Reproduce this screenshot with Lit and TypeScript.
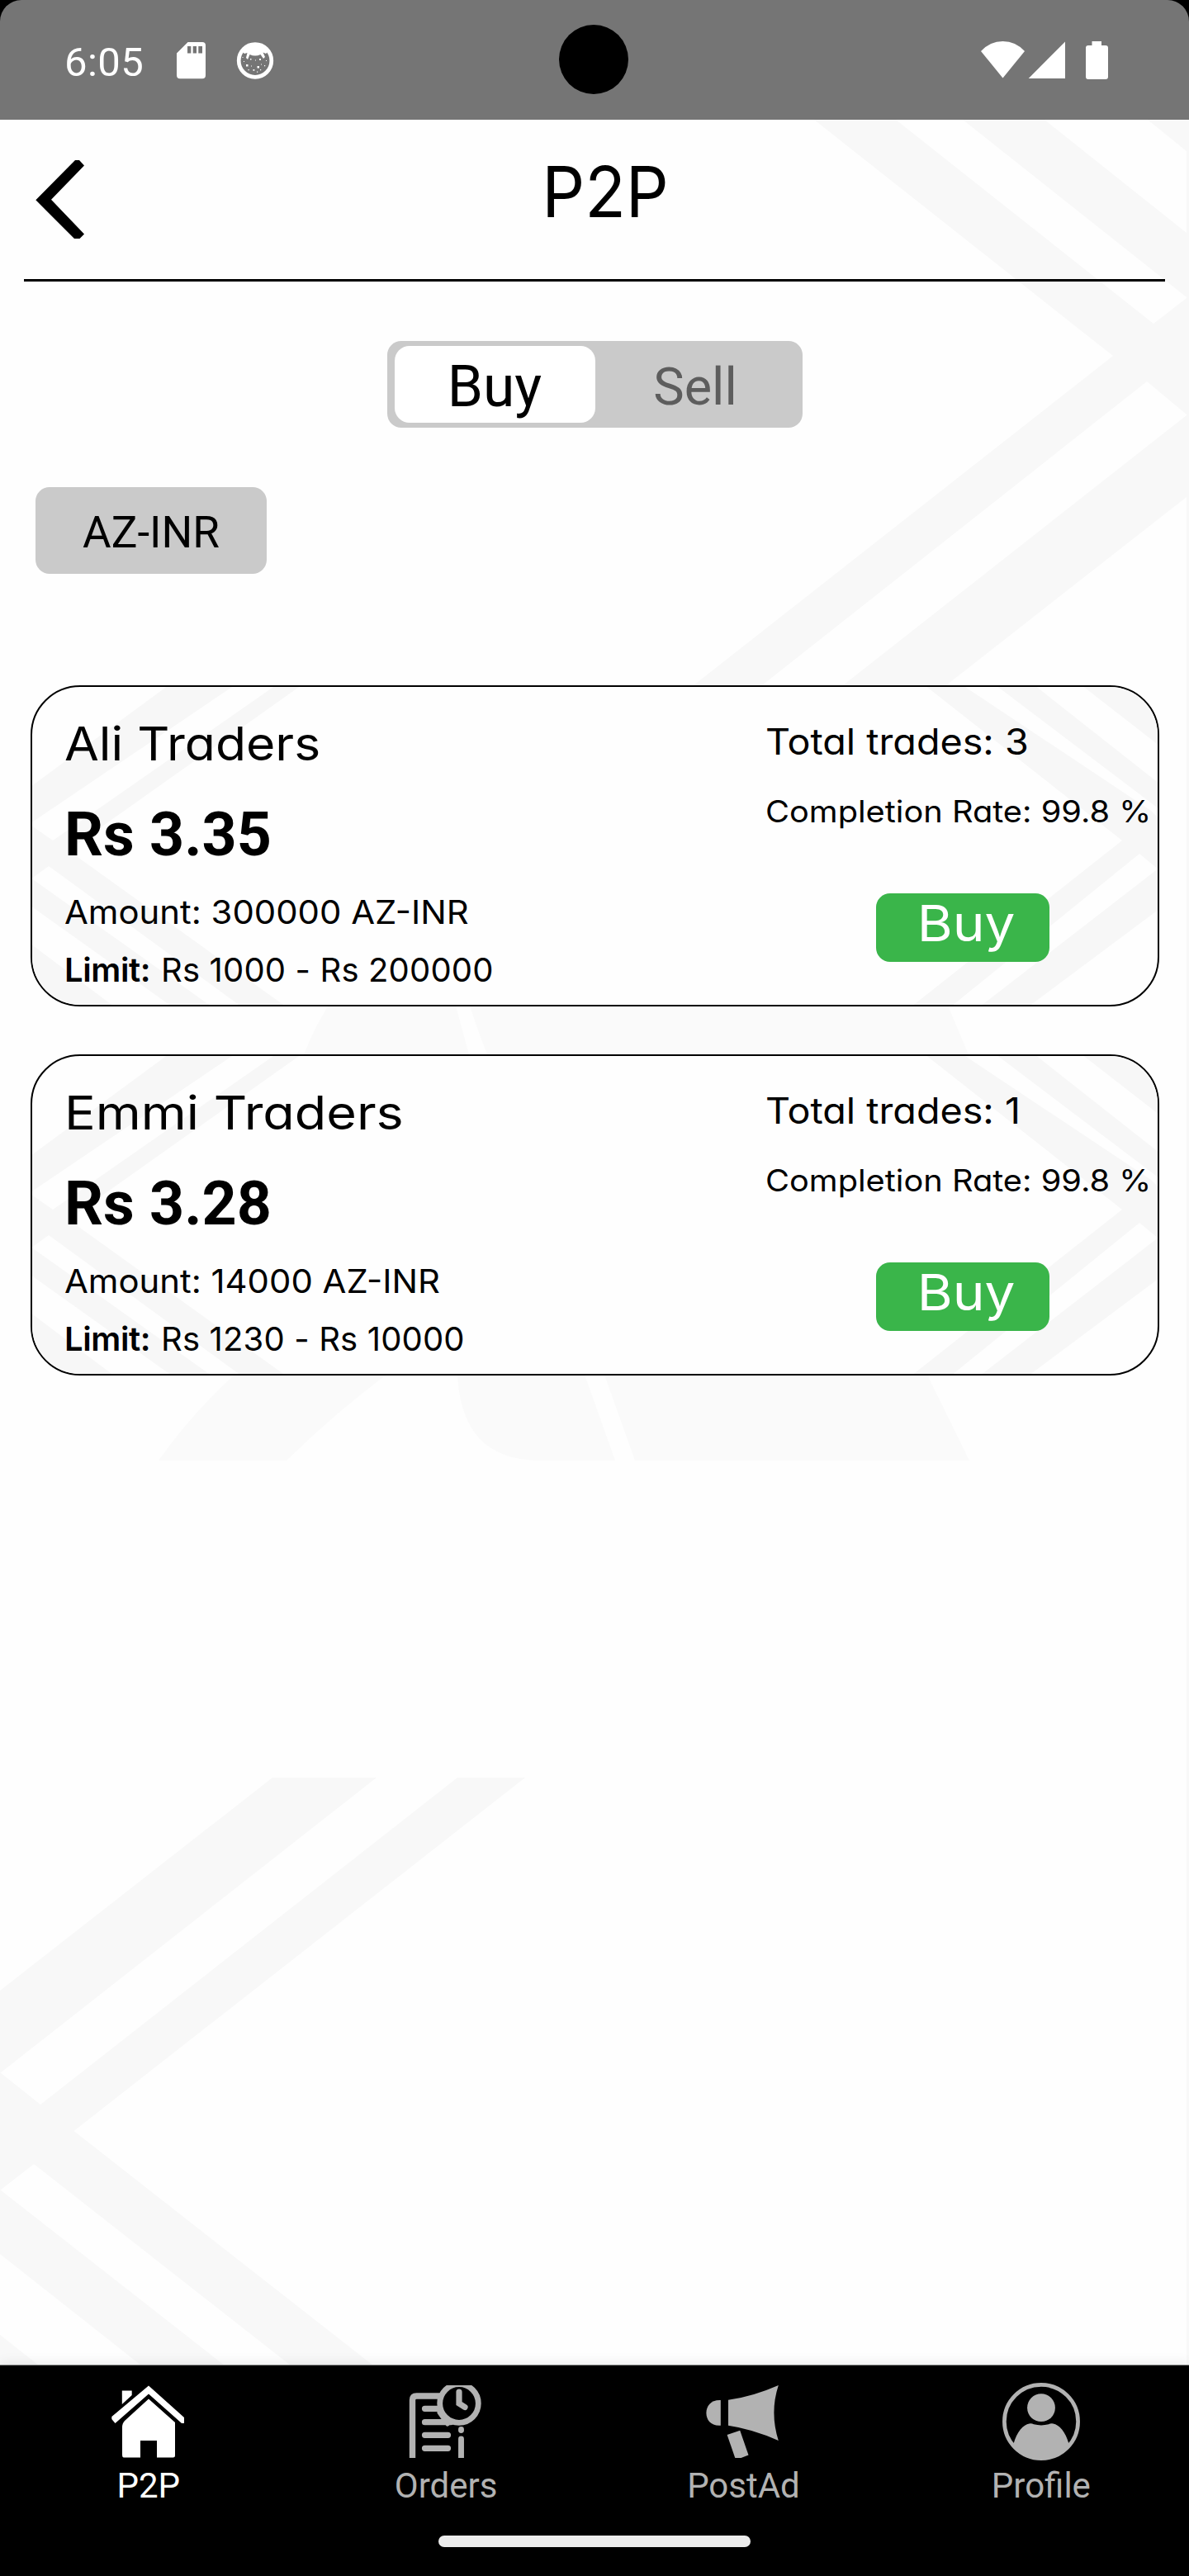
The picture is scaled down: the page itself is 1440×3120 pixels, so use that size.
import { LitElement, html, css } from "lit";

interface Trader {
  name: string;
  price: string;
  amount: string;
  limit: string;
  trades: number;
  rate: string;
  nameStretch: number;
}

const TRADERS: Trader[] = [
  { name: "Ali Traders", price: "3.35", amount: "300000", limit: "Rs 1000 - Rs 200000", trades: 3, rate: "99.8", nameStretch: 1.073 },
  { name: "Emmi Traders", price: "3.28", amount: "14000", limit: "Rs 1230 - Rs 10000", trades: 1, rate: "99.8", nameStretch: 1.112 },
];

class TraderCard extends LitElement {
  static properties = { trader: { attribute: false } };
  declare trader: Trader;

  static styles = css`
    :host { display: block; }
    .card {
      position: relative;
      box-sizing: border-box;
      height: 389px;
      border: 2px solid #000;
      border-radius: 60px;
      background: #fefefe;
      overflow: hidden;
      display: flex;
      justify-content: space-between;
      font-family: Inter, "Liberation Sans", sans-serif;
      font-feature-settings: "cv11";
      color: #000;
      white-space: nowrap;
    }
    .pattern { position: absolute; left: -2px; top: -2px; width: 1367px; height: 389px; }
    .left { position: relative; padding: 30px 0 0 39px; }
    .right { position: relative; width: 475px; padding-top: 36px; }
    .name, .amount, .total, .rate { transform-origin: left center; width: max-content; }
    .name { font-size: 56.5px; line-height: 78px; }
    .price { font: 700 73.5px/100px Roboto, sans-serif; margin: 21px 0 9px 0; }
    .row { font-size: 40px; line-height: 70px; }
    .amount { transform: scaleX(1.046); }
    .key { font-weight: 600; margin-right: 13px; letter-spacing: -0.4px; }
    .val { letter-spacing: 0.15px; }
    .total { font-size: 43.5px; line-height: 60px; transform: scaleX(1.073); }
    .rate { font-size: 37px; line-height: 60px; margin-top: 25px; transform: scaleX(1.074); }
    .buy {
      display: block;
      box-sizing: border-box;
      width: 210px;
      height: 83px;
      margin: 69px 0 0 134px;
      padding: 0 0 11px 9px;
      border: 0;
      border-radius: 17px;
      background: #3ab54a;
      color: #fff;
      font: 400 61px/72px Inter, sans-serif;
      text-align: center;
    }
    .buy span { display: inline-block; transform: scaleX(1.077); }
  `;

  render() {
    const t = this.trader;
    return html`<article class="card">
      <svg class="pattern" viewBox="37 830 1367 389" fill="#f7f7f7">
        <path d="M204 830H284L37 997V953Z" />
        <path d="M334 830H365L94 1022V1038L346 1219H292L59 1049L37 1065V999L64 1018Z" />
        <path d="M37 1063L256 1219H208L37 1097Z" />
        <path d="M37 1143L138 1219H37Z" />
        <path d="M1120 830H1166L1394 982L1404 992V1054L1380 1034L1152 1219H1104L1359 1018Z" />
        <path d="M1206 830H1253L1404 949V980Z" />
        <path d="M1310 830H1404V903Z" />
        <path d="M1187 1219L1404 1051V1101L1246 1219Z" />
      </svg>
      <div class="left">
        <div class="name" style="transform:scaleX(${t.nameStretch})">${t.name}</div>
        <div class="price">Rs ${t.price}</div>
        <div class="row amount">Amount: ${t.amount} AZ-INR</div>
        <div class="row"><span class="key">Limit:</span><span class="val">${t.limit}</span></div>
      </div>
      <div class="right">
        <div class="total">Total trades: ${t.trades}</div>
        <div class="rate">Completion Rate: ${t.rate} %</div>
        <button class="buy"><span>Buy</span></button>
      </div>
    </article>`;
  }
}
customElements.define("trader-card", TraderCard);

const homeIcon = html`<svg class="icon" viewBox="133 2886 96 96">
  <path d="M181 2890.5L224 2929V2936H221L181 2900.5L140.500 2936L136.300 2931V2928Z" />
  <path d="M148.800 2896.500H160.700V2902L148.800 2913Z" />
  <path d="M181 2906.500L213 2935V2975Q213 2977.500 210.500 2977.500H191V2957H171V2977.500H151Q149 2977.500 149 2974V2941Q149 2936 152 2933Z" />
</svg>`;

const ordersIcon = html`<svg class="icon" viewBox="493 2886 96 96">
  <defs><clipPath id="box"><rect x="493" y="2890" width="96" height="88" /></clipPath></defs>
  <g clip-path="url(#box)" fill="none" stroke="currentColor" stroke-width="7.2" stroke-linecap="round">
    <path d="M500.500 2984V2908Q500.500 2903 505.500 2903H534" stroke-linecap="butt" stroke-width="7.400" />
    <path d="M515.500 2918.300H532M515.500 2934.700H547M515.500 2950.300H543.500M515.500 2966.300H543.500" />
    <circle cx="557" cy="2912" r="23.300" stroke-width="6.800" />
    <path d="M557 2898V2912L564 2916.500" />
    <path d="M559.500 2943.400V2944.600M559.500 2955V2984" stroke-width="6.900" />
    <path d="M533 2923L543 2937" stroke-width="5" />
  </g>
</svg>`;

const postIcon = html`<svg class="icon" viewBox="853 2886 96 96">
  <path d="M873.800 2908V2938.700C862 2939.500 856.400 2932 856.400 2923.500S862 2907.500 873.800 2908Z" />
  <path d="M883 2907.700Q912 2904 943.800 2890Q933 2923 943.800 2957Q912 2943 883 2938.800Z" />
  <path d="M881.600 2950L897.200 2944.700L907.500 2974.500L898.500 2978H891.300Z" />
</svg>`;

const profileIcon = html`<svg class="icon" viewBox="1212.500 2885 96 96">
  <circle cx="1260.500" cy="2933" r="44.600" fill="none" stroke="currentColor" stroke-width="4.700" />
  <circle cx="1260.500" cy="2916.200" r="16.900" />
  <path d="M1227 2960C1231 2945 1239 2936.500 1246 2935.500Q1249 2935 1251.500 2936.300Q1260.500 2938.600 1269.500 2936.300Q1272 2935 1275 2935.500C1282 2936.500 1290 2945 1294 2960Q1282 2979 1260.500 2979T1227 2960Z" />
</svg>`;

const TABS = [
  { label: "P2P", icon: homeIcon, active: true },
  { label: "Orders", icon: ordersIcon, active: false },
  { label: "PostAd", icon: postIcon, active: false },
  { label: "Profile", icon: profileIcon, active: false },
];

class AppRoot extends LitElement {
  static styles = css`
    :host { display: block; width: 1440px; height: 3120px; }
    .screen {
      position: relative;
      display: flex;
      flex-direction: column;
      width: 1440px;
      height: 3120px;
      overflow: hidden;
      background: #fefefe;
      color: #000;
      font-family: Roboto, "Liberation Sans", sans-serif;
      isolation: isolate;
    }
    .backdrop { position: absolute; left: 0; top: 0; z-index: -1; }
    .status-wrap { background: #000; height: 145px; flex: none; }
    .status {
      position: relative;
      box-sizing: border-box;
      display: flex;
      justify-content: space-between;
      height: 145px;
      padding: 0 98px 0 78px;
      background: #757575;
      border-radius: 26px 26px 0 0;
      color: #fff;
    }
    .group { display: flex; align-items: flex-start; }
    .time { font-size: 49px; line-height: 151px; width: 136px; letter-spacing: 0.4px; }
    .group svg { margin-top: 50px; display: block; }
    .group .face { margin-left: 36.5px; }
    .camera {
      position: absolute;
      left: 677px;
      top: 30px;
      width: 84px;
      height: 84px;
      border-radius: 50%;
      background: #000;
    }
    .header {
      flex: none;
      display: flex;
      box-sizing: border-box;
      height: 196px;
      margin: 0 29px;
      padding: 0 48px 0 14px;
      border-bottom: 3px solid #000;
    }
    .back { width: 60px; height: 96px; margin-top: 49px; }
    .title {
      flex: 1;
      margin: 0;
      text-align: center;
      font: 400 84.6px/175px Inter, sans-serif;
      transform: scaleX(0.963);
    }
    .toggle {
      align-self: center;
      box-sizing: border-box;
      display: grid;
      grid-template-columns: 243px 1fr;
      width: 503px;
      height: 105px;
      margin-top: 72px;
      padding: 6px 9px;
      border-radius: 17px;
      background: #cacaca;
      text-align: center;
    }
    .seg { line-height: 100px; font-size: 69.5px; }
    .seg.on { height: 93px; border-radius: 18px; background: #fff; }
    .seg.off { font-size: 63px; line-height: 99px; color: #5d5d5d; padding-left: 1px; }
    .chip {
      width: 280px;
      height: 105px;
      margin: 72px 0 0 43px;
      border-radius: 17px;
      background: #cacaca;
      font-size: 53px;
      line-height: 110px;
      text-align: center;
    }
    .list { display: flex; flex-direction: column; gap: 58px; margin: 135px 36px 0 37px; }
    .nav {
      display: flex;
      flex-direction: column;
      align-items: center;
      box-sizing: border-box;
      height: 255px;
      margin-top: auto;
      background: #000;
      box-shadow: 0 -1px 0 #8a8c8b, 0 -3px 14px rgba(0, 0, 0, 0.08);
    }
    .tabs { display: grid; grid-template-columns: repeat(4, 360.4px); width: 1441px; height: 206px; }
    .tab { display: flex; flex-direction: column; align-items: center; color: #b2b2b2; font-size: 42px; line-height: 50px; }
    .tab.active { color: #fff; }
    .icon { width: 96px; height: 96px; margin: 20px 0 5px; fill: currentColor; }
    .pill { width: 378px; height: 14px; border-radius: 7px; background: #ececec; }
  `;

  render() {
    return html`<main class="screen">
      <svg class="backdrop" width="1440" height="3120" viewBox="0 0 1440 3120">
        <g fill="#f8f8f8">
          <path d="M986 145H1085L1397 392L1437 361V502L1389 462L923 830H840L1348 431Z" />
          <path d="M1166 145H1265L1437 282V360Z" />
          <path d="M1390 145H1437V183Z" />
          <path d="M1437 503V602L1146 830H1021Z" />
          <path d="M330 2153H456L0 2511V2411Z" />
          <path d="M554 2153H636L89.500 2581L452 2865H352L41 2621L0 2653V2510L49 2549Z" />
          <path d="M0 2652L272 2865H171L0 2730Z" />
          <path d="M0 2828L47 2865H0Z" />
          <path d="M1437 145H1440V2865H1437Z" />
        </g>
        <g fill="#fafafa">
          <path d="M398 1218Q384 1238 368 1277H568Q560 1248 552 1218Z" />
          <path d="M569 1218H1148L1173 1277H590Q577 1244 569 1218Z" />
          <path d="M284 1665Q232 1712 192 1769H347Q405 1712 468 1665Z" />
          <path d="M554 1665Q559 1769 654 1769H745L708 1665Z" />
          <path d="M732 1665L769 1769H1174L1123 1665Z" />
        </g>
      </svg>

      <div class="status-wrap">
        <div class="status">
          <div class="group">
            <div class="time">6:05</div>
            <svg width="35" height="46" viewBox="0 0 35 46" fill="#fff">
              <path fill-rule="evenodd" d="M13.500 1H31Q35 1 35 5V41Q35 45.300 31 45.300H4Q0 45.300 0 41V14.500ZM13 6V14.500H17.300V6ZM19.700 6V14.500H24V6ZM26.300 6V14.500H31V6Z" />
            </svg>
            <svg class="face" width="46" height="46" viewBox="-23 -23 46 46" fill="#fff">
              <circle cx="0" cy="0.500" r="19.800" fill="none" stroke="#fff" stroke-width="4.700" />
              <path d="M-16 -11Q-8 -20 0 -20T16 -11L13 -8L9.500 -9.500L12 -4L10 -2L6.500 -7Q0 -4 -6.500 -7L-9 -1L-11 -3L-9.500 -9L-13 -8Z" />
              <path d="M-6 -2h1.500v1.500h-1.500zM5 -2h2v2h-2zM0 -.500h1v1H0zM-11 5h2.500v2.500H-11zM2.500 7h2.500v2.500H2.500zM-5 6.500h1v1H-5zM7 4.500h1v1H7zM11 6h1.200v1.200H11zM-8.500 11h1.200v1.200H-8.500zM-2.500 11h1.800v1.800h-1.800zM6 11h1.200v1.200H6zM2 13.500h1.200v1.200H2zM-15.500 -4h1v1h-1zM-14 1h1v1H-14zM13 0h1v1H13z" />
            </svg>
          </div>
          <div class="group">
            <svg width="154" height="46" viewBox="1188 50 154 46" fill="#fff">
              <path d="M1188 62Q1199 50 1214.500 50T1241 62L1214.500 94.500Z" />
              <path d="M1290 50.500V95H1245.700Z" />
              <path d="M1322.500 50H1334V55H1339Q1342 55 1342 58V93Q1342 96 1339 96H1318Q1315 96 1315 93V58Q1315 55 1318 55H1322.500Z" />
            </svg>
          </div>
          <div class="camera"></div>
        </div>
      </div>

      <header class="header">
        <svg class="back" viewBox="43 194 60 96">
          <path d="M91 194H96L102 200.500L62 241.800L102 283.500L96.500 289H90L43.300 242.300Z" />
        </svg>
        <h1 class="title">P2P</h1>
      </header>

      <div class="toggle">
        <div class="seg on">Buy</div>
        <div class="seg off">Sell</div>
      </div>
      <div class="chip">AZ-INR</div>

      <section class="list">
        ${TRADERS.map((t) => html`<trader-card .trader=${t}></trader-card>`)}
      </section>

      <nav class="nav">
        <div class="tabs">
          ${TABS.map((t) => html`<div class="tab ${t.active ? "active" : ""}">${t.icon}<span>${t.label}</span></div>`)}
        </div>
        <div class="pill"></div>
      </nav>
    </main>`;
  }
}
customElements.define("app-root", AppRoot);
